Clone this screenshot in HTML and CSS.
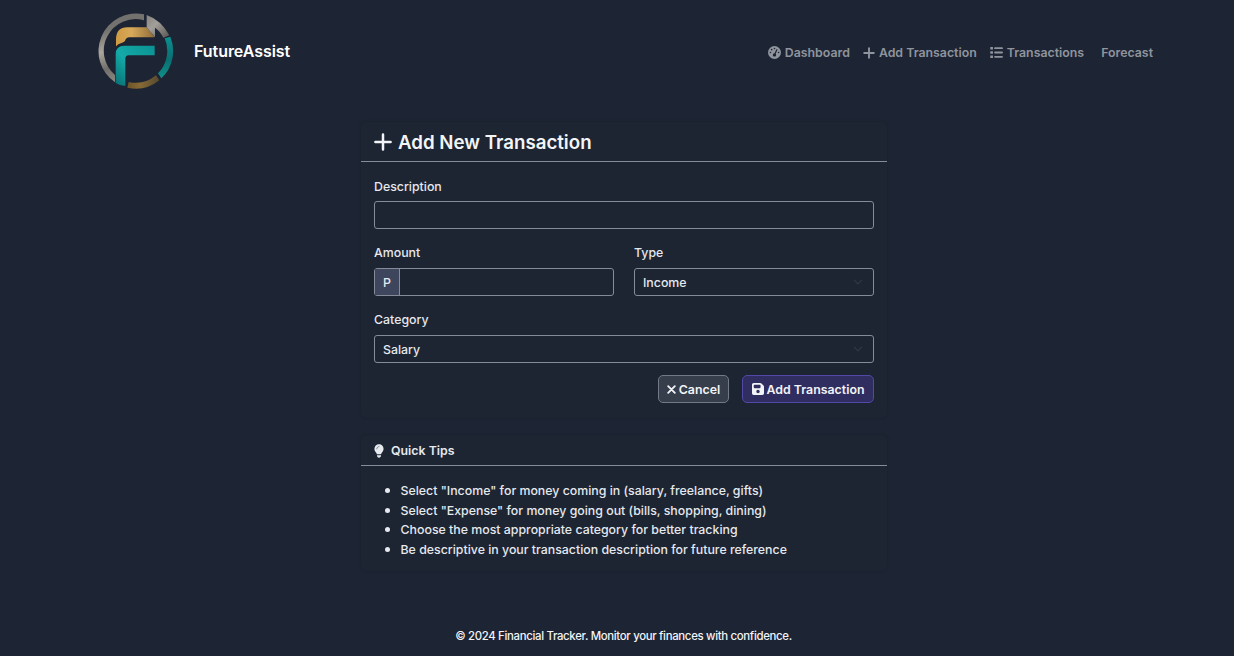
FILE: index.html
```html
<!DOCTYPE html>
<html lang="en">
<head>
<meta charset="utf-8">
<title>FutureAssist</title>
<link rel="stylesheet" href="styles.css">
</head>
<body>
<header class="navbar">
  <a class="brand">
    <svg class="logo" viewBox="18 18 240 240">
      <defs>
        <linearGradient id="silver" x1=".3" y1="0" x2="0.5" y2="1"><stop offset="0" stop-color="#716f6c"/><stop offset=".22" stop-color="#75736f"/><stop offset=".5" stop-color="#aaa69c"/><stop offset=".75" stop-color="#716f6a"/><stop offset="1" stop-color="#8f8c85"/></linearGradient>
        <linearGradient id="tip" x1="0" y1="0" x2="1" y2="1"><stop offset="0" stop-color="#85827e"/><stop offset=".4" stop-color="#a39f9a"/><stop offset="1" stop-color="#55544f"/></linearGradient>
        <linearGradient id="gold" x1="0" y1="0" x2="1" y2="0"><stop offset="0" stop-color="#cf9a42"/><stop offset=".4" stop-color="#d7a95a"/><stop offset="1" stop-color="#8e6c3a"/></linearGradient>
        <linearGradient id="base" x1="0" y1="0" x2="1" y2="0"><stop offset="0" stop-color="#6d5528"/><stop offset=".4" stop-color="#876a35"/><stop offset="1" stop-color="#55492f"/></linearGradient>
        <linearGradient id="teal" x1="0" y1="1" x2="1" y2="0"><stop offset="0" stop-color="#086e73"/><stop offset=".45" stop-color="#14aaa7"/><stop offset="1" stop-color="#0b9193"/></linearGradient>
        <linearGradient id="edge" x1="0" y1="0" x2="0" y2="1"><stop offset="0" stop-color="#0b8f90"/><stop offset=".55" stop-color="#0a6f72"/><stop offset="1" stop-color="#118f8a"/></linearGradient>
      </defs>
      <path fill="url(#silver)" d="M162 28A113 113 0 0 0 75 232V210A95 95 0 0 1 162 46Z"/>
      <path fill="url(#gold)" d="M78 124V104Q78 67 112 67H170L194 97H118Q108 97 105 108Q100 113 94 114Q84 116 78 124Z"/>
      <path fill="url(#tip)" d="M170 30Q213 45 238 91L220 98Q210 78 195 68V97L170 67Z"/>
      <path fill="url(#edge)" d="M241 95A113 113 0 0 1 214 220L204 205A95 95 0 0 0 224 100Z"/>
      <path fill="url(#base)" d="M208 226A113 113 0 0 1 112 248L116 231A95 95 0 0 0 198 211Z"/>
      <path fill="url(#teal)" d="M77 234V148Q77 122 103 122H194V151H116Q106 151 106 162V242Q90 243 77 234Z"/>
    </svg>
    <span class="brand-name">FutureAssist</span>
  </a>
  <nav class="nav">
    <a class="nav-link"><svg class="icon" viewBox="0 0 512 512"><path fill="currentColor" fill-rule="evenodd" d="M0 256a256 256 0 1 1 512 0A256 256 0 1 1 0 256zM288 96a32 32 0 1 0-64 0 32 32 0 1 0 64 0zM256 416c35 0 64-29 64-64 0-17-7-33-18-44l68-146c5-12 0-26-12-32-12-5-26 0-32 12l-67 146c-37-2-67 28-67 64 0 35 29 64 64 64zM176 144a32 32 0 1 0-64 0 32 32 0 1 0 64 0zM96 288a32 32 0 1 0 0-64 32 32 0 1 0 0 64zM448 256a32 32 0 1 0-64 0 32 32 0 1 0 64 0z"/></svg><span>Dashboard</span></a>
    <a class="nav-link"><svg class="icon nav-plus" viewBox="0 0 12 12"><path d="M6 1.2v9.6M1.2 6h9.6" stroke="currentColor" stroke-width="1.9" stroke-linecap="round"/></svg><span>Add Transaction</span></a>
    <a class="nav-link"><svg class="icon" viewBox="0 0 14 14"><path d="M.3 2.4h2.9M.3 7h2.9M.3 11.6h2.9" stroke="currentColor" stroke-width="2.7"/><path d="M5.4 2.4h7.6M5.4 7h7.6M5.4 11.6h7.6" stroke="currentColor" stroke-width="1.9" stroke-linecap="round"/></svg><span>Transactions</span></a>
    <a class="nav-link forecast"><span>Forecast</span></a>
  </nav>
</header>
<main class="content">
  <section class="card form-card">
    <h1 class="card-header title"><svg class="plus" viewBox="0 0 18 18"><path d="M9 1.4v15.2M1.4 9h15.2" stroke="currentColor" stroke-width="2.5" stroke-linecap="round"/></svg><span>Add New Transaction</span></h1>
    <form class="form">
      <div class="field first"><label>Description</label><div class="control"></div></div>
      <div class="row">
        <div class="field"><label>Amount</label><div class="control group"><span class="prefix">P</span></div></div>
        <div class="field"><label>Type</label><div class="control select"><span>Income</span><svg class="chevron" viewBox="0 0 16 16"><path d="m2 5 6 6 6-6" fill="none" stroke="currentColor" stroke-width="2" stroke-linecap="round" stroke-linejoin="round"/></svg></div></div>
      </div>
      <div class="field last"><label>Category</label><div class="control select"><span>Salary</span><svg class="chevron" viewBox="0 0 16 16"><path d="m2 5 6 6 6-6" fill="none" stroke="currentColor" stroke-width="2" stroke-linecap="round" stroke-linejoin="round"/></svg></div></div>
      <div class="actions">
        <button type="button" class="btn cancel"><svg class="x" viewBox="0 0 10 10"><path d="m1.3 1.3 7.4 7.4m0-7.4L1.3 8.7" stroke="currentColor" stroke-width="2" stroke-linecap="round"/></svg><span>Cancel</span></button>
        <button type="button" class="btn submit"><svg class="save" viewBox="0 32 448 448"><path fill="currentColor" fill-rule="evenodd" d="M64 32C29 32 0 61 0 96v320c0 35 29 64 64 64h320c35 0 64-29 64-64V173c0-17-7-33-19-45l-77-77c-12-12-28-19-45-19H64zm0 96c0-18 14-32 32-32h192c18 0 32 14 32 32v64c0 18-14 32-32 32H96c-18 0-32-14-32-32v-64zm160 160a64 64 0 1 1 0 128 64 64 0 1 1 0-128z"/></svg><span>Add Transaction</span></button>
      </div>
    </form>
  </section>
  <section class="card tips-card">
    <h2 class="card-header tips-title"><svg class="bulb" viewBox="0 0 384 512"><path fill="currentColor" d="M272 384c10-32 30-59 49-86 5-7 10-14 15-21 19-28 31-61 31-98C367 79 288 0 191 0S16 79 16 176c0 37 11 71 31 98 5 7 10 14 15 21 20 27 40 54 49 86h161zM192 512c44 0 80-36 80-80v-16H112v16c0 44 36 80 80 80z"/><path d="M104 176c0-49 39-88 88-88" fill="none" stroke="#1d2433" stroke-width="18" stroke-linecap="round"/></svg><span>Quick Tips</span></h2>
    <ul class="tips">
      <li>Select "Income" for money coming in (salary, freelance, gifts)</li>
      <li>Select "Expense" for money going out (bills, shopping, dining)</li>
      <li>Choose the most appropriate category for better tracking</li>
      <li>Be descriptive in your transaction description for future reference</li>
    </ul>
  </section>
</main>
<footer class="footer">© 2024 Financial Tracker. Monitor your finances with confidence.</footer>
</body>
</html>
```
FILE: styles.css
```css
* { box-sizing: border-box; }
body {
  margin: 0;
  height: 656px;
  overflow: hidden;
  display: flex;
  flex-direction: column;
  background: #1d2433;
  color: #e6e9ee;
  font: 500 12.35px/20px Inter, "Noto Sans", sans-serif;
}
svg { display: block; flex: none; }
.navbar { height: 102px; padding: 0 81px 0 96px; display: flex; align-items: center; justify-content: space-between; }
.brand { display: flex; align-items: center; gap: 18px; }
.logo { width: 80px; height: 80px; }
.brand-name { font-size: 16px; font-weight: 600; color: #fff; letter-spacing: -.05px; }
.nav { display: flex; gap: 13px; color: #8f949e; padding-top: 3px; }
.nav-link { display: flex; align-items: center; gap: 4px; font-weight: 600; white-space: nowrap; }
.nav-link span { padding-top: 1px; }
.forecast { margin-left: 4px; }
.icon { width: 13px; height: 13px; }
.nav-plus { width: 12px; height: 12px; }
.content { width: 526px; margin: 20px 0 0 361px; display: flex; flex-direction: column; gap: 17px; }
.card { border-radius: 5px; box-shadow: 0 0 3px rgba(10, 18, 30, .22); background: #1d2432; }
.form-card { height: 296px; }
.tips-card { height: 136px; }
.card-header { margin: 0; padding: 0 13px; display: flex; align-items: center; border-bottom: 1px solid #858b98; }
.title { height: 40px; gap: 6px; font-size: 18.7px; font-weight: 600; color: #f2f4f7; }
.title span { padding-top: 2px; }
.plus { width: 18px; height: 18px; }
.form { padding: 14px 13px 0; }
.field { flex: 1; padding-bottom: 13px; }
.field label { display: block; height: 20px; line-height: 22px; margin-bottom: 6px; }
.first label { margin-bottom: 5px; }
.last { padding-bottom: 12px; }
.row { display: flex; gap: 20px; }
.control { height: 28px; border: 1px solid #858b98; border-radius: 3px; display: flex; align-items: center; }
.group { align-items: stretch; }
.prefix { width: 25px; padding-top: 1px; display: flex; align-items: center; justify-content: center; background: #3d465c; border-right: 1px solid #858b98; }
.select { justify-content: space-between; padding: 0 10px 0 8px; }
.select span { padding-top: 1px; }
.chevron { width: 10px; height: 10px; color: #303746; }
.actions { display: flex; justify-content: flex-end; gap: 13px; }
.btn { height: 28px; padding: 0 8px; display: flex; align-items: center; justify-content: center; gap: 3px; border: 1px solid #737a87; border-radius: 5px; color: #f2f4f7; background: #363e4c; font: inherit; font-weight: 600; white-space: nowrap; }
.btn span { padding-top: 1px; }
.cancel { width: 71px; }
.submit { width: 132px; background: #302e60; border-color: #5149a5; }
.x { width: 9px; height: 9px; }
.save { width: 12px; height: 12px; }
.tips-title { height: 31px; gap: 7px; padding-top: 1px; font-size: 12.35px; font-weight: 600; }
.tips-title span { padding-top: 1px; }
.bulb { width: 10px; height: 14px; }
.tips { margin: 0; padding: 14px 0 0 39.5px; line-height: 19.7px; }
.tips li { height: 19.7px; }
.tips li::marker { font-size: 14px; }
.footer { margin-top: 55px; text-align: center; padding-left: 13px; font-size: 11.4px; letter-spacing: -.32px; color: #f2f4f7; }
```
